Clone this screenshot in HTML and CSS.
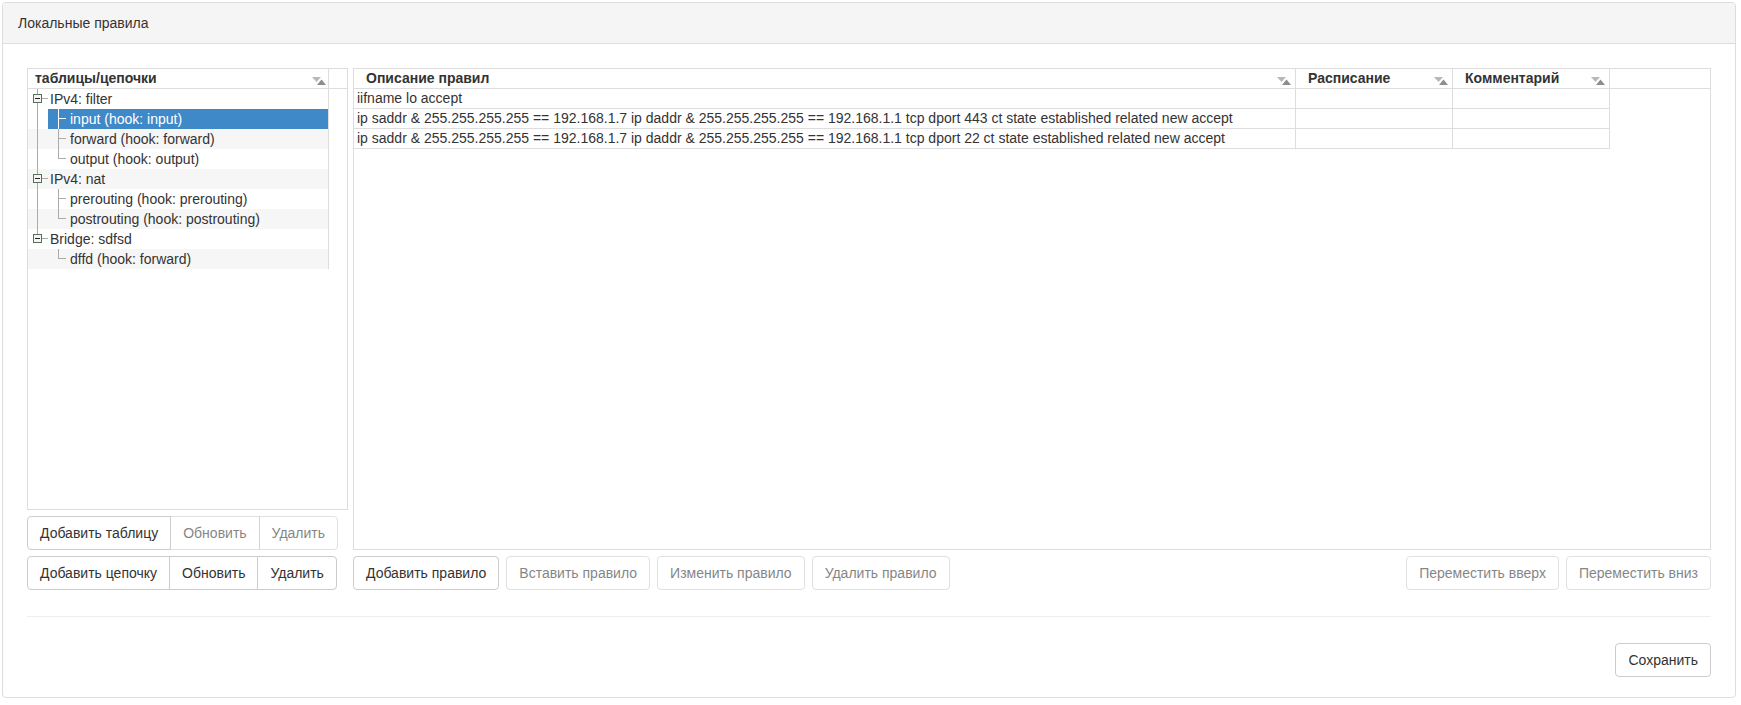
FILE: index.html
```html
<!DOCTYPE html>
<html lang="ru">
<head>
<meta charset="utf-8">
<title>Локальные правила</title>
<link rel="stylesheet" href="styles.css">
</head>
<body>
<div class="page">
  <div class="panel">
    <div class="panel-heading">Локальные правила</div>
    <div class="panel-body">
      <div class="cols">
        <div class="left">
          <div class="box tree">
            <div class="hdr">
              <div class="hcell tcol">
                <span>таблицы/цепочки</span>
                <svg class="sort" width="14" height="8" viewBox="0 0 14 8"><path d="M0 0h9L4.5 5z" fill="#b8b8b8"/><path d="M5 8h9l-4.5-5.5z" fill="#8e8e8e"/></svg>
              </div>
              <div class="hcell fill"></div>
            </div>
            <div class="tbody">
              <div class="trow">
                <svg class="tl" width="20" height="20" viewBox="0 0 20 20"><path d="M9.5 0v20M14 9.5h6" stroke="currentColor"/><rect x="5.5" y="5.5" width="8" height="8" fill="#f4f4f4" stroke="#56705a"/><path d="M7 9.5h5" stroke="#222"/></svg>
                <span class="rtext">IPv4: filter</span>
              </div>
              <div class="trow">
                <svg class="tl" width="20" height="20" viewBox="0 0 20 20"><path d="M9.5 0v20" stroke="currentColor"/></svg>
                <div class="item sel">
                  <svg class="tl" width="22" height="20" viewBox="0 0 22 20"><path d="M10.5 0v20M10 9.5h8" stroke="currentColor"/></svg>
                  <span>input (hook: input)</span>
                </div>
              </div>
              <div class="trow alt">
                <svg class="tl" width="20" height="20" viewBox="0 0 20 20"><path d="M9.5 0v20" stroke="currentColor"/></svg>
                <div class="item">
                  <svg class="tl" width="22" height="20" viewBox="0 0 22 20"><path d="M10.5 0v20M10 9.5h8" stroke="currentColor"/></svg>
                  <span>forward (hook: forward)</span>
                </div>
              </div>
              <div class="trow">
                <svg class="tl" width="20" height="20" viewBox="0 0 20 20"><path d="M9.5 0v20" stroke="currentColor"/></svg>
                <div class="item">
                  <svg class="tl" width="22" height="20" viewBox="0 0 22 20"><path d="M10.5 0v10M10 9.5h8" stroke="currentColor"/></svg>
                  <span>output (hook: output)</span>
                </div>
              </div>
              <div class="trow alt">
                <svg class="tl" width="20" height="20" viewBox="0 0 20 20"><path d="M9.5 0v20M14 9.5h6" stroke="currentColor"/><rect x="5.5" y="5.5" width="8" height="8" fill="#f4f4f4" stroke="#56705a"/><path d="M7 9.5h5" stroke="#222"/></svg>
                <span class="rtext">IPv4: nat</span>
              </div>
              <div class="trow">
                <svg class="tl" width="20" height="20" viewBox="0 0 20 20"><path d="M9.5 0v20" stroke="currentColor"/></svg>
                <div class="item">
                  <svg class="tl" width="22" height="20" viewBox="0 0 22 20"><path d="M10.5 0v20M10 9.5h8" stroke="currentColor"/></svg>
                  <span>prerouting (hook: prerouting)</span>
                </div>
              </div>
              <div class="trow alt">
                <svg class="tl" width="20" height="20" viewBox="0 0 20 20"><path d="M9.5 0v20" stroke="currentColor"/></svg>
                <div class="item">
                  <svg class="tl" width="22" height="20" viewBox="0 0 22 20"><path d="M10.5 0v10M10 9.5h8" stroke="currentColor"/></svg>
                  <span>postrouting (hook: postrouting)</span>
                </div>
              </div>
              <div class="trow">
                <svg class="tl" width="20" height="20" viewBox="0 0 20 20"><path d="M9.5 0v10M14 9.5h6" stroke="currentColor"/><rect x="5.5" y="5.5" width="8" height="8" fill="#f4f4f4" stroke="#56705a"/><path d="M7 9.5h5" stroke="#222"/></svg>
                <span class="rtext">Bridge: sdfsd</span>
              </div>
              <div class="trow alt">
                <svg class="tl" width="20" height="20" viewBox="0 0 20 20"></svg>
                <div class="item">
                  <svg class="tl" width="22" height="20" viewBox="0 0 22 20"><path d="M10.5 0v10M10 9.5h8" stroke="currentColor"/></svg>
                  <span>dffd (hook: forward)</span>
                </div>
              </div>
            </div>
          </div>
          <div class="btn-group">
            <button class="btn">Добавить таблицу</button>
            <button class="btn" disabled>Обновить</button>
            <button class="btn" disabled>Удалить</button>
          </div>
          <div class="btn-group">
            <button class="btn">Добавить цепочку</button>
            <button class="btn">Обновить</button>
            <button class="btn">Удалить</button>
          </div>
        </div>
        <div class="right">
          <div class="box grid">
            <div class="hdr">
              <div class="hcell gh c1"><span>Описание правил</span><svg class="sort" width="14" height="8" viewBox="0 0 14 8"><path d="M0 0h9L4.5 5z" fill="#b8b8b8"/><path d="M5 8h9l-4.5-5.5z" fill="#8e8e8e"/></svg></div>
              <div class="hcell gh c2"><span>Расписание</span><svg class="sort" width="14" height="8" viewBox="0 0 14 8"><path d="M0 0h9L4.5 5z" fill="#b8b8b8"/><path d="M5 8h9l-4.5-5.5z" fill="#8e8e8e"/></svg></div>
              <div class="hcell gh c3"><span>Комментарий</span><svg class="sort" width="14" height="8" viewBox="0 0 14 8"><path d="M0 0h9L4.5 5z" fill="#b8b8b8"/><path d="M5 8h9l-4.5-5.5z" fill="#8e8e8e"/></svg></div>
              <div class="hcell fill"></div>
            </div>
            <div class="gbody">
              <div class="grow"><div class="gcell c1">iifname lo accept</div><div class="gcell c2"></div><div class="gcell c3"></div></div>
              <div class="grow"><div class="gcell c1">ip saddr &amp; 255.255.255.255 == 192.168.1.7 ip daddr &amp; 255.255.255.255 == 192.168.1.1 tcp dport 443 ct state established related new accept</div><div class="gcell c2"></div><div class="gcell c3"></div></div>
              <div class="grow"><div class="gcell c1">ip saddr &amp; 255.255.255.255 == 192.168.1.7 ip daddr &amp; 255.255.255.255 == 192.168.1.1 tcp dport 22 ct state established related new accept</div><div class="gcell c2"></div><div class="gcell c3"></div></div>
            </div>
          </div>
          <div class="toolbar">
            <button class="btn">Добавить правило</button>
            <button class="btn" disabled>Вставить правило</button>
            <button class="btn" disabled>Изменить правило</button>
            <button class="btn" disabled>Удалить правило</button>
            <span class="spacer"></span>
            <button class="btn" disabled>Переместить вверх</button>
            <button class="btn" disabled>Переместить вниз</button>
          </div>
        </div>
      </div>
      <hr class="sep">
      <div class="footer">
        <button class="btn">Сохранить</button>
      </div>
    </div>
  </div>
</div>
</body>
</html>
```

FILE: styles.css
```css
* { box-sizing: border-box; }
html, body { margin: 0; padding: 0; background: #fff; }
body {
  font-family: "Liberation Sans", Arial, sans-serif;
  font-size: 14px;
  color: #333;
}
.page { padding: 2px 0 0 2px; }
.panel {
  width: 1734px;
  border: 1px solid #ddd;
  border-radius: 4px;
  background: #fff;
}
.panel-heading {
  height: 41px;
  padding: 10px 15px;
  line-height: 20px;
  background: #f5f5f5;
  border-bottom: 1px solid #ddd;
  border-radius: 3px 3px 0 0;
  color: #333;
}
.panel-body { padding: 24px 24px 20px 24px; }
.cols { display: flex; gap: 5px; }
.left { width: 321px; display: flex; flex-direction: column; }
.right { flex: 1; display: flex; flex-direction: column; }

.box { border: 1px solid #ddd; background: #fff; }
.tree { height: 442px; }
.grid { height: 482px; }

.hdr {
  display: flex;
  height: 20px;
  border-bottom: 1px solid #ddd;
}
.hcell {
  display: flex;
  height: 19px;
  line-height: 19px;
  border-right: 1px solid #ddd;
  font-weight: bold;
  color: #333;
  white-space: nowrap;
}
.hcell.fill { flex: 1; border-right: none; }
.tcol { width: 301px; padding-left: 7px; }
.tcol .sort { margin-right: 2px; }
.gh { padding-left: 12px; }
.gh .sort { margin-right: 4px; }
.c1 { width: 942px; }
.c2 { width: 157px; }
.c3 { width: 157px; }
.sort { margin-left: auto; align-self: flex-end; margin-bottom: 3px; flex: none; }

.tbody { width: 301px; }
.trow {
  display: flex;
  align-items: center;
  height: 20px;
  border-right: 1px solid #ddd;
  line-height: 20px;
  color: #333;
  white-space: nowrap;
}
.trow.alt { background: #f6f6f6; }
.tl { display: block; flex: none; color: #ababab; }
.rtext { margin-left: 2px; }
.item {
  flex: 1;
  display: flex;
  align-items: center;
  height: 20px;
}
.item.sel { background: #3f89c9; color: #fff; }
.item.sel .tl { color: #fff; }

.grow { display: flex; height: 20px; }
.gcell {
  height: 20px;
  line-height: 19px;
  padding-left: 3px;
  border-right: 1px solid #ddd;
  border-bottom: 1px solid #ddd;
  white-space: nowrap;
  overflow: hidden;
  color: #333;
}

.btn {
  height: 34px;
  padding: 6px 12px;
  font-family: "Liberation Sans", Arial, sans-serif;
  font-size: 14px;
  line-height: 20px;
  color: #333;
  background: #fff;
  border: 1px solid #ccc;
  border-radius: 4px;
  white-space: nowrap;
  cursor: pointer;
}
.btn:disabled { opacity: 0.6; cursor: default; }

.btn-group { display: flex; margin-top: 6px; }
.btn-group .btn { border-radius: 0; }
.btn-group .btn + .btn { margin-left: -1px; }
.btn-group .btn:first-child { border-radius: 4px 0 0 4px; }
.btn-group .btn:last-child { border-radius: 0 4px 4px 0; }

.toolbar { display: flex; gap: 7px; margin-top: 6px; }
.spacer { flex: 1; }

.sep {
  margin: 26px 0;
  height: 0;
  border: 0;
  border-top: 1px solid #eee;
}
.footer { display: flex; justify-content: flex-end; }
```
